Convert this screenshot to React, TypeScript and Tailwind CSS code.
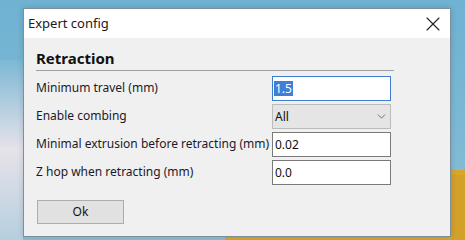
import { ChevronDown, X } from "lucide-react";

const rows = [
  { label: "Minimum travel (mm)", value: "1.5", kind: "focus" },
  { label: "Enable combing", value: "All", kind: "select" },
  { label: "Minimal extrusion before retracting (mm)", value: "0.02", kind: "text" },
  { label: "Z hop when retracting (mm)", value: "0.0", kind: "text" },
];

export default function App() {
  return (
    <div
      className="relative h-[240px] w-[465px] overflow-hidden bg-gradient-to-b from-[#6fb2d2] via-[#7bb8d4] to-[#8bbfd6] pl-[23px] pt-[8px] text-[12px] text-[#111]"
      style={{ fontFamily: '"Noto Sans", "Open Sans", sans-serif' }}
    >
      {/* desktop scraps behind the dialog */}
      <div className="absolute left-0 top-[60px] h-[180px] w-[23px] bg-gradient-to-b from-[#7bb8d4] via-[#e6e2ea] to-[#b5cfdf]" />
      <div className="absolute bottom-0 left-[225px] h-[70px] w-[240px] bg-[#d8a62b]" />
      <div className="absolute right-0 top-[175px] h-[65px] w-[14px] bg-[#d3a02a]" />

      <div className="relative flex h-[229px] w-[428px] flex-col border border-[#7e8f9c] bg-[#f0f0f0] shadow-[0_0_6px_rgba(0,0,0,0.15)]">
        <div className="flex h-[29px] items-center justify-between bg-white pl-[4px] pr-[5px]">
          <span className="text-[13px] text-[#1b1b1b]">Expert config</span>
          <X size={24} strokeWidth={1.1} className="text-[#222]" />
        </div>

        <div className="pl-[12px] pt-[10px]">
          <div className="h-[23px] w-[358px] border-b border-[#a0a0a0] text-[15px] font-bold leading-[20px] text-[#111]">
            Retraction
          </div>

          <div className="mt-[5px] grid grid-cols-[236px_119px] gap-y-[3px]">
            {rows.map((row) => (
              <div key={row.label} className="contents">
                <div className="flex h-[25px] items-center pb-[1px] text-[#1a1a2a]">{row.label}</div>
                {row.kind === "select" ? (
                  <div className="flex h-[25px] items-center justify-between border border-[#bcbcbc] bg-[#e5e5e5] pl-[2px] pr-[2px]">
                    <span>{row.value}</span>
                    <ChevronDown size={13} strokeWidth={1.5} className="text-[#555]" />
                  </div>
                ) : (
                  <div
                    className={`flex h-[25px] items-center bg-white pl-[1px] ${
                      row.kind === "focus" ? "border border-[#3c7fd1]" : "border border-[#7a7a7a]"
                    }`}
                  >
                    {row.kind === "focus" ? (
                      <span className="bg-[#3f7fd8] px-[1px] leading-[15px] text-white">{row.value}</span>
                    ) : (
                      <span className="pl-[1px]">{row.value}</span>
                    )}
                  </div>
                )}
              </div>
            ))}
          </div>

          <button className="ml-px mt-[15px] flex h-[24px] w-[87px] items-center justify-center border border-[#adadad] bg-[#e1e1e1] text-[#111]">
            Ok
          </button>
        </div>
      </div>
    </div>
  );
}
